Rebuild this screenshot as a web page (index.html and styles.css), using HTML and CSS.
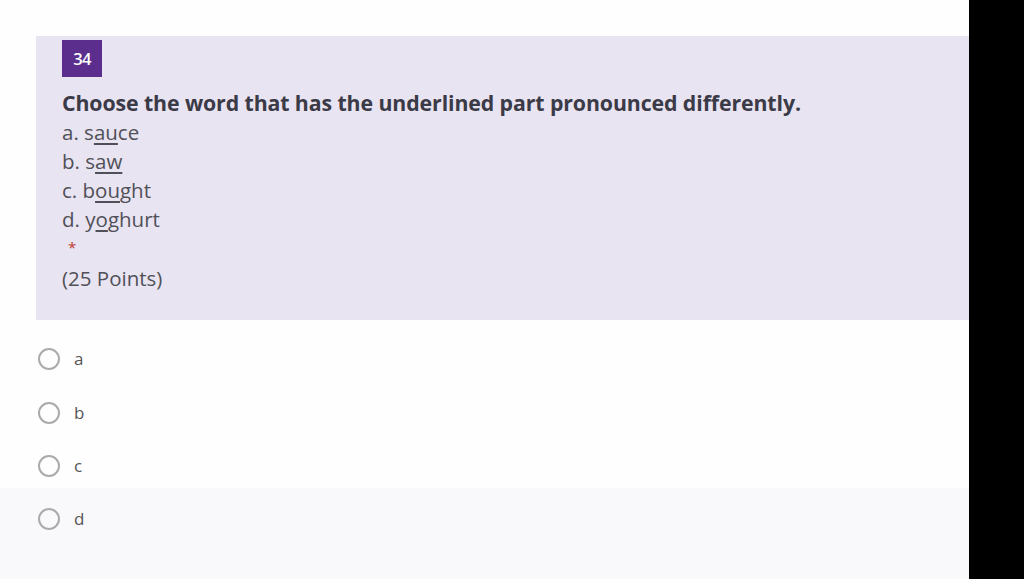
FILE: index.html
```html
<!DOCTYPE html>
<html>
<head>
<meta charset="utf-8">
<link rel="stylesheet" href="styles.css">
</head>
<body>
<div class="screen">
  <main class="page">
    <section class="question">
      <div class="badge">34</div>
      <h1 class="title">Choose the word that has the underlined part pronounced differently.</h1>
      <div class="opt">a. s<u>au</u>ce</div>
      <div class="opt">b. s<u>aw</u></div>
      <div class="opt">c. b<u>ou</u>ght</div>
      <div class="opt">d. y<u>o</u>ghurt</div>
      <div class="star">*</div>
      <div class="points">(25 Points)</div>
    </section>
    <ul class="choices">
      <li class="choice"><span class="radio"></span><span class="lbl">a</span></li>
      <li class="choice"><span class="radio"></span><span class="lbl">b</span></li>
      <li class="choice short"><span class="radio"></span><span class="lbl">c</span></li>
      <li class="choice last"><span class="radio"></span><span class="lbl">d</span></li>
    </ul>
  </main>
  <aside class="black"></aside>
</div>
</body>
</html>
```
FILE: styles.css
```css
* { box-sizing: border-box; }
html, body { margin: 0; padding: 0; }
body {
  font-family: "Open Sans", "Noto Sans", "Liberation Sans", sans-serif;
  width: 1024px;
  height: 579px;
  overflow: hidden;
  background: #000;
}
.screen { display: flex; height: 579px; }
.page {
  width: 969px;
  background: #fefefe;
  padding-top: 36px;
  display: flex;
  flex-direction: column;
}
.black { flex: 1; background: #000; }
.question {
  margin-left: 36px;
  background: #e9e4f1;
  height: 284px;
  padding: 4px 0 0 26px;
  color: #444;
}
.badge {
  width: 40px;
  height: 37px;
  background: #5b2e8e;
  color: #fff;
  font-size: 16.5px;
  font-weight: 600;
  display: flex;
  align-items: center;
  justify-content: center;
  letter-spacing: -0.8px;
}
.title {
  margin: 12px 0 1px 0;
  font-size: 21.3px;
  font-weight: 700;
  color: #3b3a47;
  line-height: 28px;
  letter-spacing: -0.1px;
}
.opt {
  font-size: 20.5px;
  line-height: 29px;
  color: #505058;
}
.opt u { text-decoration-thickness: 1.5px; text-underline-offset: 3px; }
.star {
  color: #c0392b;
  font-size: 15px;
  line-height: 20px;
  padding-left: 6px;
  height: 20px;
  margin-top: 3px;
}
.points {
  font-size: 20.5px;
  line-height: 30px;
  margin-top: 6px;
  color: #505058;
}
.choices {
  list-style: none;
  margin: 12px 0 0 0;
  padding: 0;
  display: flex;
  flex-direction: column;
  flex: 1;
}
.choice {
  height: 54px;
  display: flex;
  align-items: flex-start;
  padding: 16px 0 0 38px;
  gap: 14px;
  font-size: 17px;
  color: #555;
}
.choice.short { height: 48px; padding-top: 15px; }
.choice.last {
  flex: 1;
  height: auto;
  padding-top: 20px;
  background: #f9f8fb;
}
.radio {
  width: 22px;
  height: 22px;
  border: 2px solid #ababab;
  border-radius: 50%;
  flex: none;
}
.lbl { line-height: 22px; }
```
